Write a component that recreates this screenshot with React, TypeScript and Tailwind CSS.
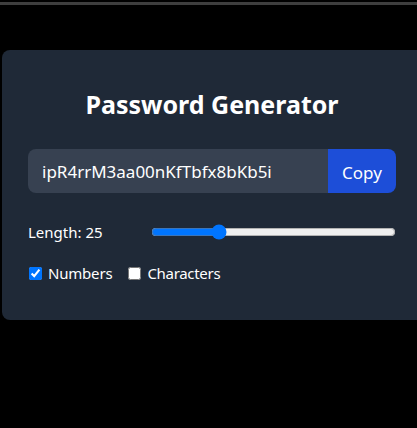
import React, { useState } from "react";

export default function App() {
  const [len, setLen] = useState(25);
  const [numbers, setNumbers] = useState(true);
  const [chars, setChars] = useState(false);
  return (
    <div
      className="w-[417px] h-[428px] bg-black overflow-hidden text-white"
      style={{ fontFamily: '"Noto Sans", "Open Sans", sans-serif' }}
    >
      <div className="h-[2px]" />
      <div className="h-[3px] bg-[#3e3e3e]" />
      <div className="h-[45px]" />
      <div className="ml-[2px] w-[430px] rounded-lg bg-[#1f2937] pl-[26px] pr-[36px] pt-[38px] pb-[37px]">
        <h1 className="text-center text-[25px] leading-[32px] font-bold w-[368px]">
          Password Generator
        </h1>
        <div className="mt-[29px] flex w-[368px] h-[44px]">
          <div className="flex-1 bg-[#374151] rounded-l-lg flex items-center pl-[14px] pt-[2px] text-[17px]">
            ipR4rrM3aa00nKfTbfx8bKb5i
          </div>
          <button className="w-[68px] bg-[#1d4ed8] rounded-r-lg pt-[3px] text-[17px] text-white">
            Copy
          </button>
        </div>
        <div className="mt-[27px] flex items-center w-[368px] h-[24px]">
          <span className="text-[15px] w-[123px] pt-[1px]">Length: {len}</span>
          <input
            type="range"
            min={6}
            max={78}
            value={len}
            onChange={(e) => setLen(Number(e.target.value))}
            className="w-[245px] m-0"
          />
        </div>
        <div className="mt-[19px] flex items-center text-[15px] h-[20px]">
          <input
            type="checkbox"
            checked={numbers}
            onChange={() => setNumbers(!numbers)}
            className="m-0 ml-[1px] w-[13px] h-[13px]"
          />
          <span className="ml-[6px] tracking-[-0.2px]">Numbers</span>
          <input
            type="checkbox"
            checked={chars}
            onChange={() => setChars(!chars)}
            className="m-0 ml-[16px] w-[13px] h-[13px]"
          />
          <span className="ml-[6px] tracking-[-0.3px]">Characters</span>
        </div>
      </div>
    </div>
  );
}
